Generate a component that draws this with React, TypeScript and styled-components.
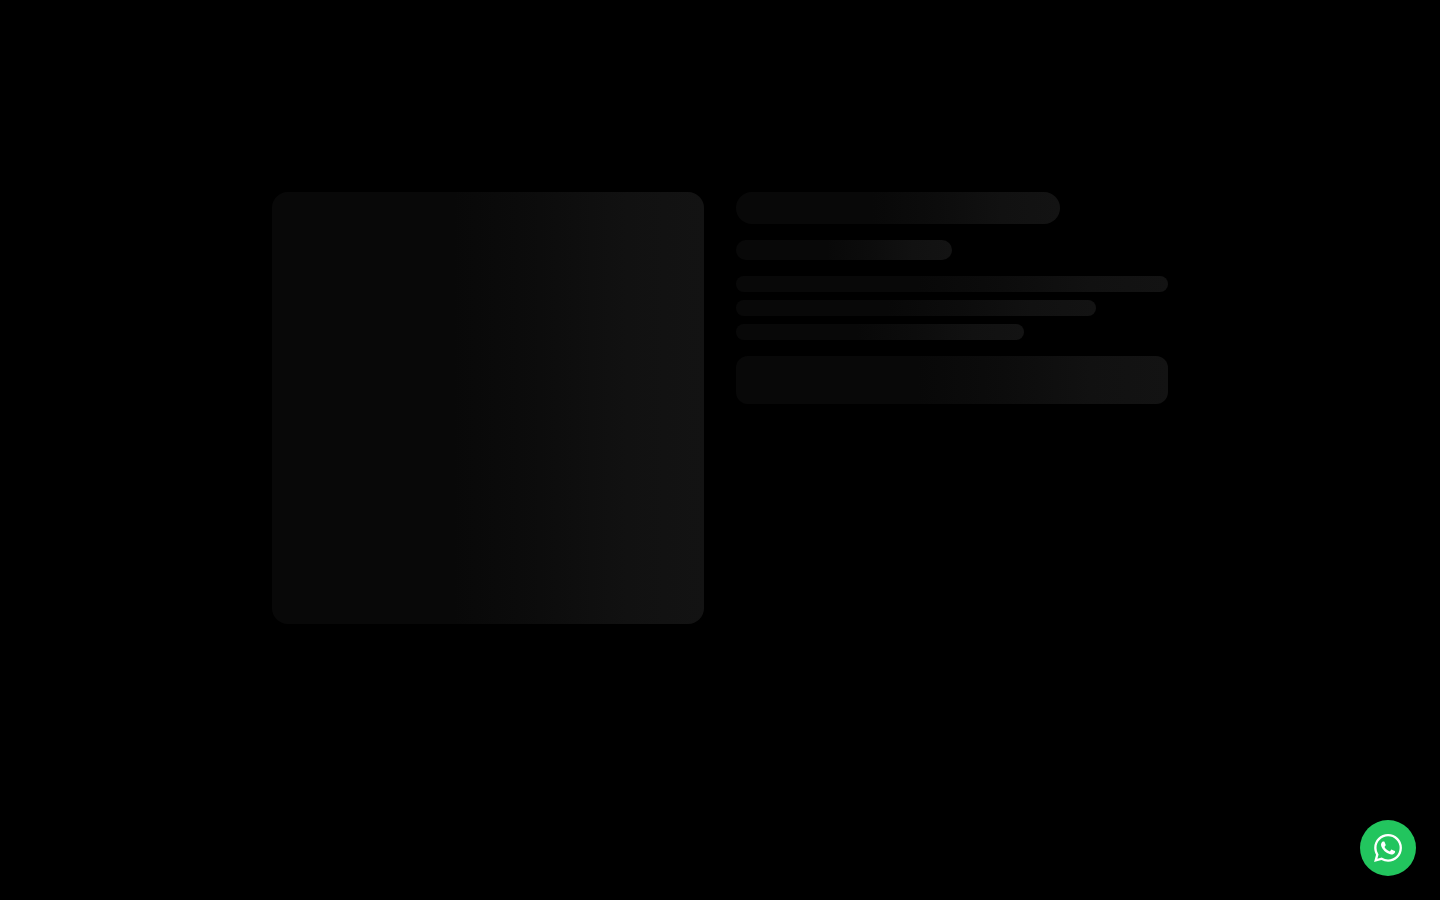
import React from "react";
import styled, { createGlobalStyle } from "styled-components";
import { SiWhatsapp } from "react-icons/si";

const GlobalStyle = createGlobalStyle`
  *, *::before, *::after { box-sizing: border-box; }
  body {
    margin: 0;
    background: #000;
    font-family: "Inter", sans-serif;
  }
`;

const Page = styled.main`
  min-height: 100vh;
  padding: 192px 16px 64px;
  background: #000;
`;

const ProductGrid = styled.div`
  display: grid;
  grid-template-columns: 1fr 1fr;
  gap: 32px;
  align-items: start;
  max-width: 896px;
  margin: 0 auto;

  @media (max-width: 640px) {
    grid-template-columns: 1fr;
  }
`;

const Skeleton = styled.div`
  background: linear-gradient(90deg, #080808 0%, #080808 42%, #0c0c0c 62%, #111111 82%, #131313 100%);
`;

const ImageSkeleton = styled(Skeleton)`
  aspect-ratio: 1;
  border-radius: 16px;
`;

const Details = styled.div`
  display: flex;
  flex-direction: column;
  gap: 16px;
`;

const Paragraph = styled.div`
  display: flex;
  flex-direction: column;
  gap: 8px;
`;

const TitleSkeleton = styled(Skeleton)`
  width: 75%;
  height: 32px;
  border-radius: 16px;
`;

const PriceSkeleton = styled(Skeleton)`
  width: 50%;
  height: 20px;
  border-radius: 10px;
`;

const LineSkeleton = styled(Skeleton)<{ $sixths: number }>`
  width: calc(100% * ${({ $sixths }) => $sixths} / 6);
  height: 16px;
  border-radius: 8px;
`;

const ButtonSkeleton = styled(Skeleton)`
  height: 48px;
  border-radius: 12px;
`;

const WhatsAppLink = styled.a`
  position: fixed;
  right: 24px;
  bottom: 24px;
  display: flex;
  align-items: center;
  justify-content: center;
  width: 56px;
  height: 56px;
  border-radius: 50%;
  background: #22c55e;
  color: #fff;
`;

export default function App() {
  return (
    <>
      <GlobalStyle />
      <Page aria-busy="true">
        <ProductGrid>
          <ImageSkeleton />
          <Details>
            <TitleSkeleton />
            <PriceSkeleton />
            <Paragraph>
              <LineSkeleton $sixths={6} />
              <LineSkeleton $sixths={5} />
              <LineSkeleton $sixths={4} />
            </Paragraph>
            <ButtonSkeleton />
          </Details>
        </ProductGrid>
      </Page>
      <WhatsAppLink href="https://wa.me/" aria-label="WhatsApp">
        <SiWhatsapp size={28} aria-hidden="true" />
      </WhatsAppLink>
    </>
  );
}
